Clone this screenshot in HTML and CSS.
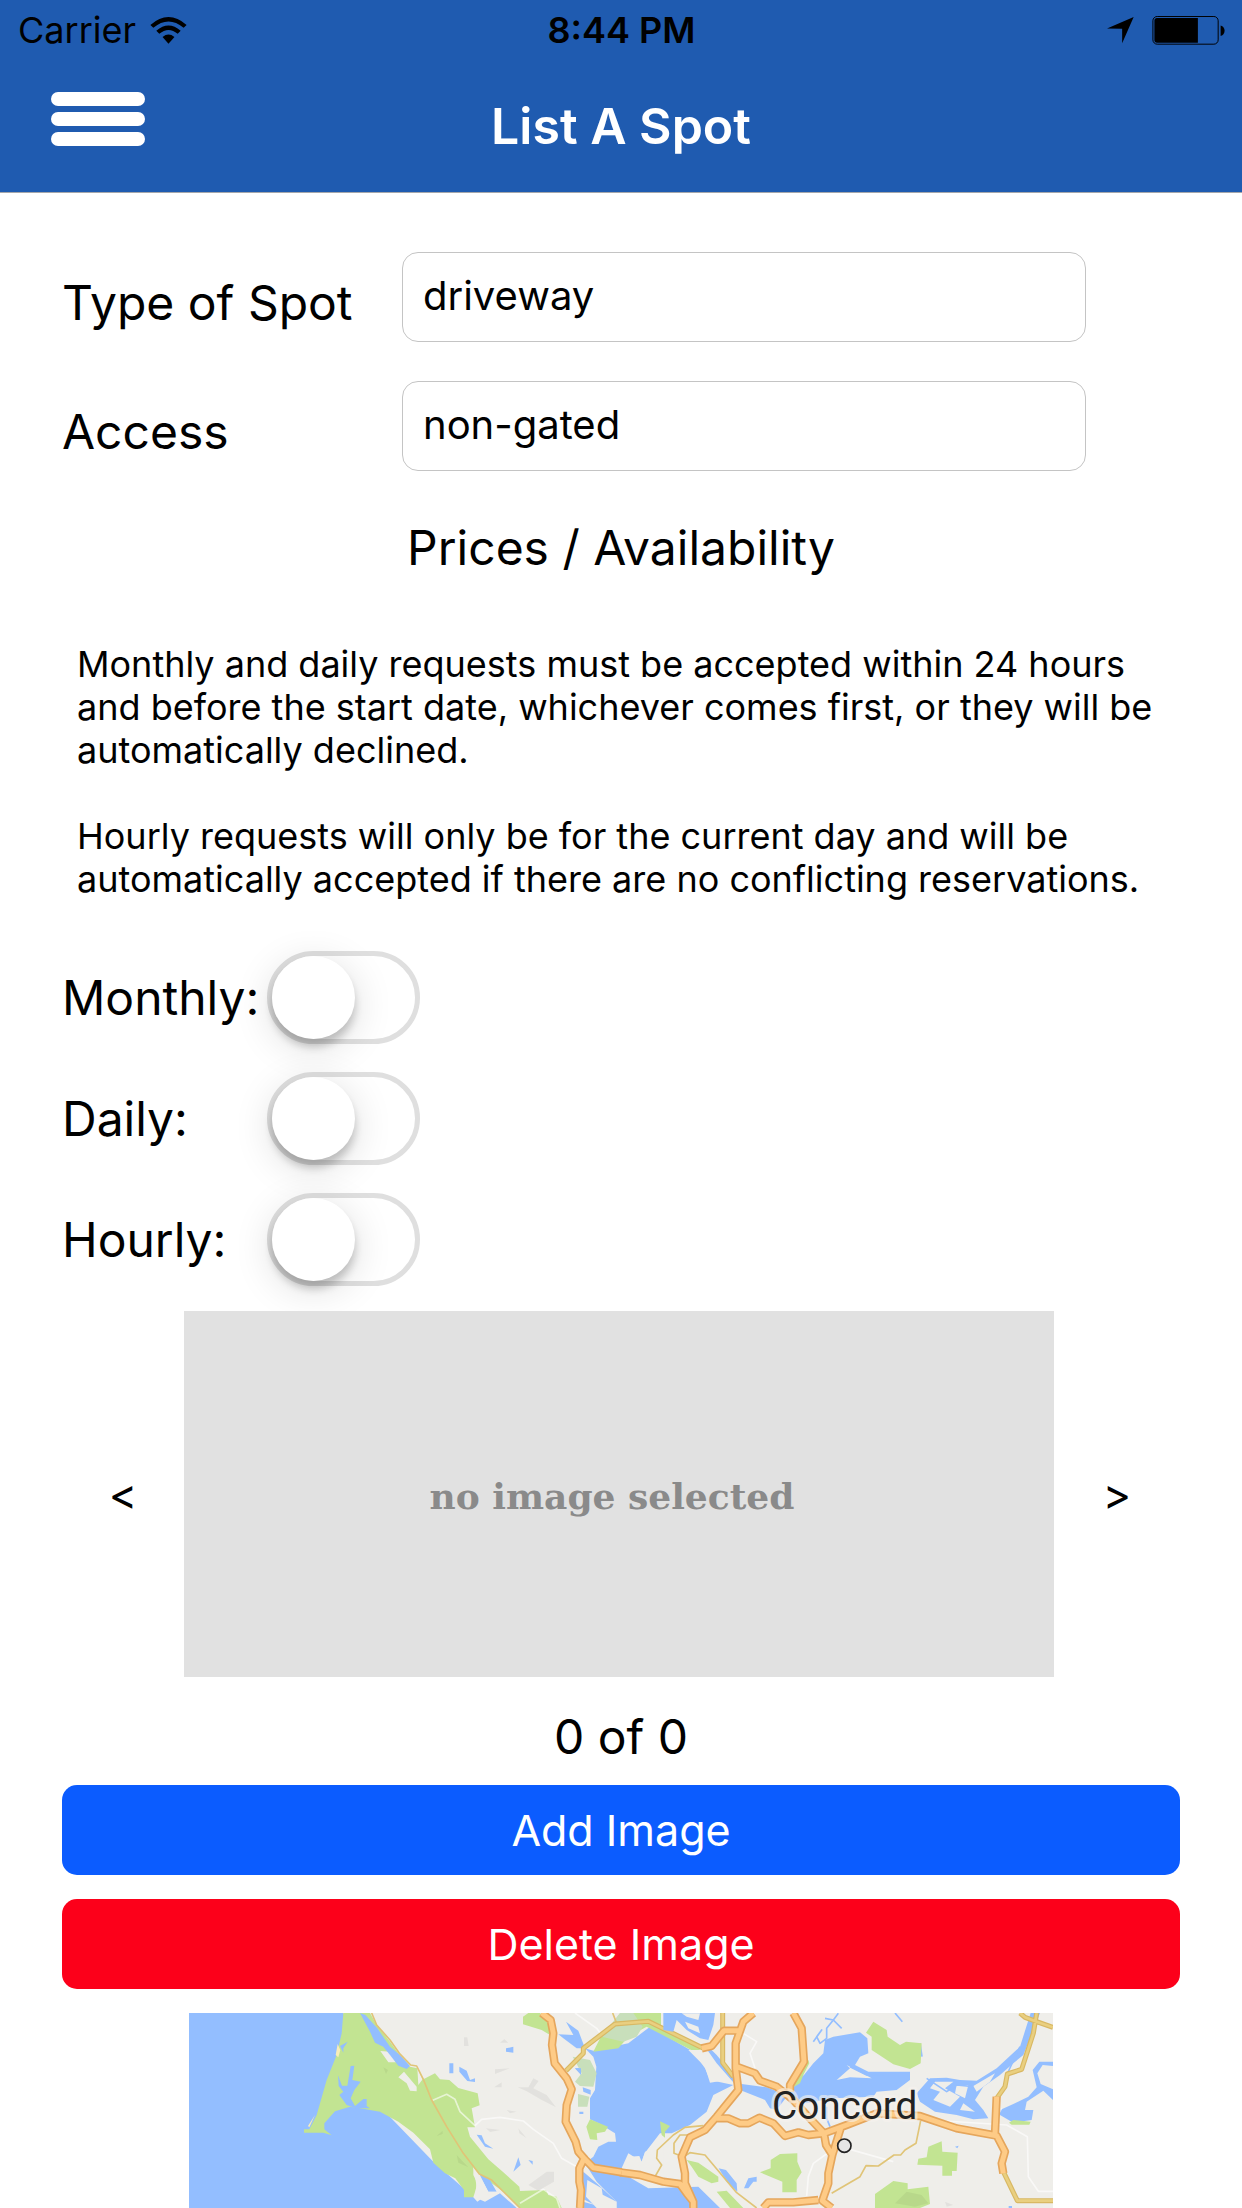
FILE: index.html
```html
<!DOCTYPE html>
<html lang="en">
<head>
<meta charset="utf-8">
<meta name="viewport" content="width=device-width">
<title>List A Spot</title>
<link rel="stylesheet" href="styles.css">
</head>
<body>
<header class="header">
  <div class="status">
    <div class="status-left">
      <span>Carrier</span>
      <svg class="wifi" viewBox="0 0 110 82" aria-hidden="true">
        <path d="M0 24Q55-24 110 24L101 33Q55-6 9 33Z"/>
        <path d="M18 42Q55 10 92 42L83 51Q55 28 27 51Z"/>
        <path d="M37 61Q55 46 73 61L55 81Z"/>
      </svg>
    </div>
    <span class="clock">8:44 PM</span>
    <div class="status-right">
      <svg class="location" viewBox="0 0 82 82" aria-hidden="true"><path d="M0 35L81 0L46 80V36Z"/></svg>
      <svg class="battery" viewBox="0 0 219 88" aria-hidden="true">
        <rect x="1.500" y="1.500" width="198" height="84" rx="13" fill="none" stroke="#000" stroke-width="3"/>
        <path d="M14 6H138V81H14Q6 81 6 73V14Q6 6 14 6Z"/>
        <path d="M207 29Q219 33 219 45Q219 57 207 61Z"/>
      </svg>
    </div>
  </div>
  <div class="navbar">
    <button class="menu" type="button" aria-label="Menu">
      <span class="bar"></span><span class="bar"></span><span class="bar"></span>
    </button>
    <h1 class="title">List A Spot</h1>
  </div>
</header>
<main class="content">
  <div class="fields">
    <label class="field-label" for="type">Type of Spot</label>
    <input class="field" id="type" type="text" value="driveway">
    <label class="field-label" for="access">Access</label>
    <input class="field" id="access" type="text" value="non-gated">
  </div>
  <h2 class="heading">Prices / Availability</h2>
  <div class="note">
    <p>Monthly and daily requests must be accepted within 24 hours<br>and before the start date, whichever comes first, or they will be<br>automatically declined.</p>
    <p>Hourly requests will only be for the current day and will be<br>automatically accepted if there are no conflicting reservations.</p>
  </div>
  <div class="switches">
    <label for="monthly">Monthly:</label>
    <input class="switch" id="monthly" type="checkbox" role="switch">
    <label for="daily">Daily:</label>
    <input class="switch" id="daily" type="checkbox" role="switch">
    <label for="hourly">Hourly:</label>
    <input class="switch" id="hourly" type="checkbox" role="switch">
  </div>
  <div class="carousel">
    <button class="arrow" type="button" aria-label="Previous image">&lt;</button>
    <div class="preview">no image selected</div>
    <button class="arrow" type="button" aria-label="Next image">&gt;</button>
  </div>
  <div class="count">0 of 0</div>
  <div class="actions">
    <button class="action add" type="button">Add Image</button>
    <button class="action delete" type="button">Delete Image</button>
  </div>
  <svg class="map" viewBox="27 39 2592 585" role="img" aria-label="Map around Concord">
    <rect x="27" y="39" width="2592" height="585" fill="#efeeea"/>
    <!-- ocean and coast -->
    <path class="water" d="M27 39H490L610 330L760 485L880 590L915 605L960 580L1010 624H27Z"/>
    <path class="park" d="M490 39H570L590 75L630 125L655 160L690 200L712 205L730 238L765 220L780 238L808 240L835 264L893 280L899 316L875 325L885 382H862L870 410L925 478L970 517L1018 560L1020 573L1098 570L1105 585L1130 590L1145 624H1020L970 575L897 522L880 500L880 525L890 545L885 592H852V570L826 535L795 520L760 488L750 448L700 398L655 365L600 335L540 325L510 320L465 334L433 370V388L455 406L430 398H372V388H388L410 345L440 240L470 165L485 100Z"/>
    <path class="land" d="M601 153L630 155L648 187L625 187ZM655 232L672 215L710 260V274L690 272L680 250ZM712 205L728 238L715 255Z"/>
    <path class="sand" d="M473 132L481 150L475 172L467 165ZM405 345L388 382L384 378Z"/>
    <path class="water" d="M540 39L556 45L592 85L630 140L660 165L690 198L680 207L655 197L630 165L610 140L585 128L570 95ZM474 226L486 257H502L512 198L523 197L517 240L542 245L523 270L512 295L525 318L550 297H560V318L570 325H528L500 315L478 285L490 275L476 258ZM480 138L503 125L490 145L490 158ZM898 522L930 540L950 575H925Z"/>
    <path class="land" d="M880 500L896 522L925 575H955L920 585L892 605L880 592L890 560Z"/>
    <path class="park" d="M1029 50L1045 39H1080L1110 70V105L1085 90L1029 73Z"/>
    <path class="shade" d="M852 112H862L866 138H852ZM960 128L973 117L985 128ZM942 262L965 247V262ZM945 222V208L990 205ZM1013 262H1045L1060 235L1076 243L1060 265L1100 285L1128 322L1085 300L1040 274ZM980 330L1010 335L990 340ZM918 385L962 390L930 396ZM1015 385L1040 415L1018 400ZM1045 555L1100 515H1122V545L1075 572ZM830 465L865 502L835 488ZM770 408L788 392V402ZM610 202L624 210L618 222Z"/>
    <path class="water" d="M978 145L1000 140V158L978 155ZM808 190H820V220H808ZM838 200L860 212L870 240L885 235V246L862 243L838 215ZM890 404L905 406L915 430L940 446L915 440ZM1000 515L1015 472L1022 495ZM1045 480L1058 483V494ZM1158 65L1195 92L1215 145H1190L1150 115L1135 103L1180 105ZM1185 205L1203 204V224ZM1198 335H1210V342H1198Z"/>
    <!-- San Pablo Bay -->
    <path class="water" d="M1215 145L1240 170L1249 200L1245 270L1230 295V358L1260 372L1305 400L1308 425L1285 425L1255 440L1240 470L1215 490L1250 545L1310 605V624H1620L1555 560L1405 565L1320 515L1345 460L1385 485L1395 458L1440 400L1475 400L1530 375L1580 335L1600 285L1660 255L1590 240L1575 205L1540 155L1410 80L1345 130L1240 152Z"/>
    <path class="park" d="M1265 105L1315 70L1320 39H1443V75L1500 110L1560 140L1558 163L1400 80L1345 110L1315 145L1240 155ZM1230 358L1284 380L1275 395L1250 400L1252 420L1230 418L1219 380Z"/>
    <path class="marsh" d="M1315 45L1320 39H1360L1388 80L1370 110L1330 125L1265 110ZM1178 170L1230 180L1250 220L1240 260L1200 258L1185 245L1205 220ZM1194 282L1228 290L1222 320H1194Z"/>
    <path class="water" d="M1208 262L1232 270V284L1210 275ZM1185 205H1203V224ZM1210 515L1250 550L1310 605V624H1190V600L1245 615L1195 590Z"/>
    <path class="land" d="M1222 540L1265 565L1268 584L1310 605V624H1250L1218 590Z"/>
    <path class="minor" d="M1185 39L1250 85L1265 105M755 302L800 283L825 298L840 335L885 377L905 358L960 352L1030 363L1060 388L1120 430L1145 475L1190 500M1020 610L1090 568L1130 595L1140 624"/>
    <path class="road thin" d="M575 39L590 75L630 120L658 160L692 195L710 198L730 238L755 300L800 380L850 460L898 522L935 540L1020 624M1298 39L1310 70"/>
    <path class="road-edge" d="M1158 212L1210 160V145L1305 72L1405 64L1570 145"/>
    <path class="road" d="M1158 212L1210 160V145L1305 72L1405 64L1570 145"/>
    <!-- East Bay and delta -->
    <g transform="translate(1320 0)">
      <path class="water" d="M130 39H285L280 75L265 120L240 115L200 90L170 60L160 95L130 90Z"/>
      <path class="land" d="M185 40H240L235 60L200 50ZM195 65L235 80L240 100L205 85Z"/>
      <path class="water" d="M265 140L290 165L340 225L348 250L440 262L500 285L520 250L552 225L580 190L610 160L615 120L640 110L720 97L742 115L745 160L720 170L705 195L745 215L870 215V240L830 270L770 275L760 290L640 295L560 310L500 290L470 330L450 325L435 300L360 270L290 190L262 150Z"/>
      <path class="land" d="M650 240L690 205L680 195L755 235L690 232Z"/>
      <path class="water" d="M890 280L930 235L980 233L1020 240L1070 242L1130 205L1200 140L1232 39H1260L1240 90L1210 165L1180 190L1140 225L1090 260L1065 300L1090 330L1105 355L1060 358L1010 345L945 335L900 305ZM1140 330L1180 312L1225 290L1250 262L1238 210L1258 185L1299 185V198L1268 195L1252 220L1262 252L1299 268V300L1270 272L1220 305L1215 330H1240L1235 360L1180 368L1140 345Z"/>
      <path class="land" d="M945 245H1000L975 265L1020 290L990 320L940 300L960 275L930 265ZM1010 255H1045L1035 295L1005 280ZM1060 258L1125 220L1110 245L1070 275ZM1030 310L1065 335L1020 330Z"/>
      <path class="stream" d="M580 125L605 90L590 110L600 130L620 115V85L640 60L655 40M615 55L640 60L665 85M825 39L847 65M690 200L740 225H790M620 320V355L630 380M900 130L906 170M920 235L980 275L1010 255L1060 260M1160 225L1200 140"/>
      <path class="land" d="M205 150L240 150L285 200L320 240L270 248L255 200Z"/>
      <path class="park" d="M760 65L800 90L803 110L840 135L858 125L905 130L902 190L870 207L820 193L755 150V110L738 98ZM520 262L535 230L565 180L568 190L550 225L540 250ZM120 364L150 378L135 395V413L125 405ZM200 480L235 488L295 530V545L275 550L235 530L215 500ZM480 462L532 460V485L545 517L530 540V577H487V545L420 517L452 505V480ZM925 440L965 424L967 455L1013 458L1010 513H996V527H967V497L892 494L895 476L920 472ZM765 582L820 543L863 550V568L925 560L930 612L900 624H765ZM290 575L320 572L370 624H330ZM1167 368L1180 360L1232 365L1228 374H1175Z"/>
      <path class="shade" d="M975 605L1000 615L980 620ZM860 575L905 585L925 610L885 620L825 610Z"/>
      <path class="land" d="M30 470L58 468L65 485L75 455L90 450L130 415V510L75 510L40 495Z"/>
      <path class="water" d="M296 505L318 510L350 550L352 575L320 545ZM372 565L385 535L410 530V545H440L400 545L385 565ZM1005 440L1016 437L1012 445ZM1166 618H1176V624H1166Z"/>
      <path class="minor" d="M370 100L410 125L390 160L405 205M560 588L565 530L580 490L615 465L660 440L820 485M930 360L1160 375L1222 410L1225 530L1255 574H1299M1115 375L1145 325"/>
      <path class="road thin" d="M250 377L195 382L160 405L112 450L110 475L125 495L105 530M205 405H180L162 430V460L190 470L210 458L255 465L350 578L410 624M635 580L720 530L738 497L775 498L822 465H842L855 450L888 430L902 362"/>
      <path class="road-edge" d="M308 39V188L340 230M1200 39L1215 52L1250 65L1299 82M1250 39L1240 100L1205 208L1162 222L1155 260L1130 295M1150 515L1192 602H1299"/>
      <path class="road" d="M308 39V188L340 230M1200 39L1215 52L1250 65L1299 82M1250 39L1240 100L1205 208L1162 222L1155 260L1130 295M1150 515L1192 602H1299"/>
      <path class="highway-edge" d="M400 39L370 65L347 130V205L355 270L290 350L255 390L210 412L185 470L195 520V550L220 605V624M245 145L275 138L312 92H360M350 200L405 220L420 242L470 260L520 300L560 345L612 400M520 39L545 85L552 185L510 255V275M290 355H325L360 370H385L418 353L460 370L495 408L535 397L565 405L612 400L680 375L770 340L900 348L1010 385L1130 407L1155 455L1145 490L1150 520M1130 290L1125 400M612 400L618 435L637 465L662 385M637 465L625 520V550L607 602L635 624M595 600L520 607H445L430 624M0 517L60 525L130 545L180 552L200 580L220 605"/>
      <path class="highway" d="M400 39L370 65L347 130V205L355 270L290 350L255 390L210 412L185 470L195 520V550L220 605V624M245 145L275 138L312 92H360M350 200L405 220L420 242L470 260L520 300L560 345L612 400M520 39L545 85L552 185L510 255V275M290 355H325L360 370H385L418 353L460 370L495 408L535 397L565 405L612 400L680 375L770 340L900 348L1010 385L1130 407L1155 455L1145 490L1150 520M1130 290L1125 400M612 400L618 435L637 465L662 385M637 465L625 520V550L607 602L635 624M595 600L520 607H445L430 624M0 517L60 525L130 545L180 552L200 580L220 605"/>
    </g>
    <path class="highway-edge" d="M1085 39L1112 60L1120 100L1116 135L1124 190L1160 235L1175 268L1160 315L1157 365L1187 425L1195 455L1215 478L1240 503L1325 517M1215 470L1198 505V545L1203 570L1200 624"/>
    <path class="highway" d="M1085 39L1112 60L1120 100L1116 135L1124 190L1160 235L1175 268L1160 315L1157 365L1187 425L1195 455L1215 478L1240 503L1325 517M1215 470L1198 505V545L1203 570L1200 624"/>
    <text class="city" x="1994" y="356" text-anchor="middle">Concord</text>
    <circle cx="1993" cy="437" r="20" fill="#e6e6e6" stroke="#222" stroke-width="5"/>
  </svg>
</main>
</body>
</html>
```
FILE: styles.css
```css
* {
  box-sizing: border-box;
}

body {
  margin: 0;
  background: #fff;
  color: #000;
  font-family: Inter, "Liberation Sans", sans-serif;
  font-size: 48px;
  line-height: 60px;
}

button,
input {
  font: inherit;
  margin: 0;
}

.header {
  background: #1f5bb0;
  border-bottom: 1px solid #a5a7ab;
}

.status {
  display: grid;
  grid-template-columns: 1fr auto 1fr;
  align-items: center;
  height: 60px;
  padding: 0 17px 0 18px;
  font-size: 36px;
}

.status-left,
.status-right {
  display: flex;
  align-items: center;
}

.status-left {
  gap: 14px;
}

.status-right {
  justify-content: flex-end;
  gap: 18px;
}

.clock {
  font-weight: 600;
}

.wifi {
  width: 37px;
  height: 27px;
}

.location {
  width: 27px;
  height: 27px;
}

.battery {
  width: 73px;
  height: 29px;
}

.navbar {
  display: grid;
  grid-template-columns: 1fr auto 1fr;
  align-items: center;
  height: 132px;
  padding: 0 51px;
}

.menu {
  display: flex;
  flex-direction: column;
  gap: 6px;
  width: 94px;
  padding: 0 0 14px;
  background: none;
  border: 0;
}

.bar {
  width: 100%;
  height: 14px;
  border-radius: 7px;
  background: #fff;
}

.title {
  margin: 0;
  color: #fff;
  font-size: 50px;
  font-weight: 600;
}

.content {
  padding: 59px 62px 0;
}

.fields {
  display: grid;
  grid-template-columns: 340px minmax(0, 684px);
  row-gap: 39px;
  align-items: center;
}

.field-label {
  padding-top: 12px;
}

.field {
  width: 100%;
  height: 90px;
  padding: 0 20px 4px;
  border: 1px solid #c4c4c4;
  border-radius: 16px;
  background: #fff;
  color: #000;
  font-size: 40px;
}

.heading {
  margin: 47px 0 65px;
  font-size: 48px;
  font-weight: 400;
  text-align: center;
}

.note {
  padding: 0 15px;
  font-size: 36px;
  line-height: 43px;
}

.note p {
  margin: 0 0 43px;
}

.switches {
  display: grid;
  grid-template-columns: 205px auto;
  justify-content: start;
  align-items: center;
  row-gap: 28px;
  padding: 7px 0 25px;
}

.switch {
  appearance: none;
  width: 153px;
  height: 93px;
  border: 5px solid #dfdfdf;
  border-radius: 47px;
}

.switch::before {
  content: "";
  display: block;
  width: 83px;
  height: 83px;
  border-radius: 50%;
  background: #fff;
  box-shadow: 0 8px 8px rgba(0, 0, 0, 0.2), 0 8px 40px rgba(0, 0, 0, 0.14);
}

.switch:checked::before {
  margin-left: auto;
}

.carousel {
  display: grid;
  grid-template-columns: 122px minmax(0, 1fr) 126px;
  align-items: center;
}

.arrow {
  padding: 0;
  border: 0;
  background: none;
  color: #000;
  font-size: 43px;
}

.preview {
  display: flex;
  align-items: center;
  justify-content: center;
  padding: 4px 14px 0 0;
  aspect-ratio: 870 / 366;
  background: #e1e1e1;
  color: #8a8a8a;
  font-family: "DejaVu Serif", serif;
  font-size: 36px;
  font-weight: 700;
}

.count {
  padding: 30px 0 18px;
  text-align: center;
}

.actions {
  display: grid;
  gap: 24px;
}

.action {
  height: 90px;
  border: 0;
  border-radius: 15px;
  color: #fff;
  font-size: 43px;
}

.add {
  background: #0b5cff;
}

.delete {
  background: #fc001a;
}

.map {
  display: block;
  width: calc(100% - 254px);
  margin: 24px auto 0;
}

.map path {
  fill: none;
  stroke-linejoin: round;
}

.map .water {
  fill: #93beff;
}

.map .land {
  fill: #efeeea;
}

.map .park {
  fill: #c2e492;
}

.map .marsh {
  fill: #c8dfbb;
}

.map .sand {
  fill: #f8edb8;
}

.map .shade {
  fill: #000;
  fill-opacity: 0.05;
}

.map .stream {
  stroke: #93beff;
  stroke-width: 5px;
}

.map .minor {
  stroke: #fff;
  stroke-opacity: 0.6;
  stroke-width: 5px;
}

.map .road-edge {
  stroke: #d9b863;
  stroke-width: 15px;
}

.map .road {
  stroke: #e9cf80;
  stroke-width: 8px;
}

.map .thin {
  stroke: #e0c477;
  stroke-width: 5px;
}

.map .highway-edge {
  stroke: #e5a65c;
  stroke-width: 25px;
}

.map .highway {
  stroke: #fecb86;
  stroke-width: 15px;
}

.city {
  fill: #222;
  stroke: #f6f3ee;
  stroke-opacity: 0.6;
  stroke-width: 18px;
  stroke-linejoin: round;
  paint-order: stroke;
  font-family: Roboto, sans-serif;
  font-size: 116px;
}
```
